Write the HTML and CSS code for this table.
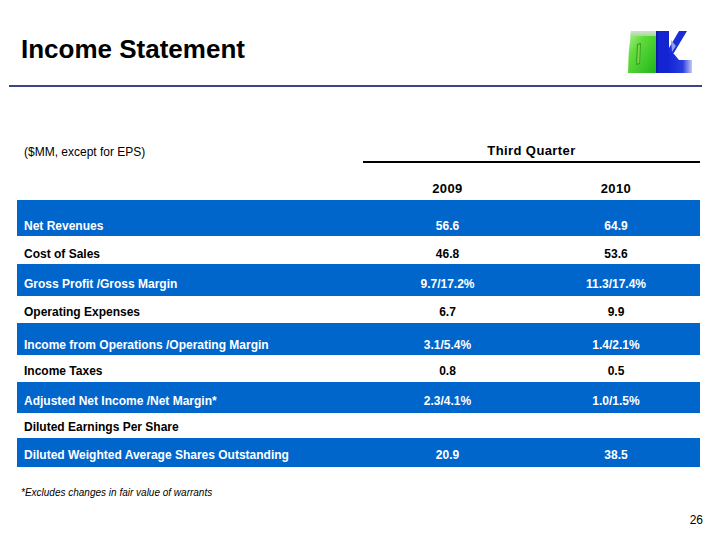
FILE: index.html
```html
<!DOCTYPE html>
<html>
<head>
<meta charset="utf-8">
<link rel="stylesheet" href="styles.css">
</head>
<body>
<div class="page">
  <div class="header">
    <h1 class="title">Income Statement</h1>
    <svg class="logo" width="66" height="44" viewBox="0 0 66 44">
      <defs>
        <linearGradient id="gG" x1="0" y1="0" x2="1" y2="1">
          <stop offset="0" stop-color="#b8eea0"/>
          <stop offset="0.35" stop-color="#5fdc3a"/>
          <stop offset="1" stop-color="#21b51d"/>
        </linearGradient>
        <linearGradient id="gB" x1="0" y1="0" x2="1" y2="0">
          <stop offset="0" stop-color="#1226d6"/>
          <stop offset="0.6" stop-color="#2a3ee0"/>
          <stop offset="1" stop-color="#c4c8f4"/>
        </linearGradient>
        <linearGradient id="gT" x1="0" y1="0" x2="0" y2="1">
          <stop offset="0" stop-color="#d8dcd8"/>
          <stop offset="1" stop-color="#9fe08a"/>
        </linearGradient>
      </defs>
      <path d="M4 1 H29 V43 H1 Q1 22 4 1 Z" fill="url(#gG)"/>
      <path d="M4 1 H29 V6 H3.4 Z" fill="url(#gT)"/>
      <polygon points="10,14 14,13 13,34 9,35" fill="#3b9c1f"/>
      <polygon points="11,15 13,14.5 12.2,33 10.2,33.6" fill="#7fd64f"/>
      <rect x="29" y="1" width="13" height="42" fill="#1424d0"/>
      <polygon points="42,18 52,1 60,1 45,26 42,26" fill="#1a2ed8"/>
      <polygon points="42,24 47,24 52,30 65,30 65,43 42,43" fill="url(#gB)"/>
      <polygon points="44,10 45,22 49,16" fill="#8f9cf0"/>
      <polygon points="29,1 31,1 31,43 29,43" fill="#0c1aa8"/>
    </svg>
  </div>
  <div class="rule"></div>

  <div class="table">
    <div class="row row-head">
      <div class="cell label note">($MM, except for EPS)</div>
      <div class="cell quarter">Third Quarter</div>
    </div>
    <div class="row row-years">
      <div class="cell label"></div>
      <div class="cell year">2009</div>
      <div class="cell year">2010</div>
    </div>

    <div class="row band h36 p3">
      <div class="cell label">Net Revenues</div>
      <div class="cell num">56.6</div>
      <div class="cell num">64.9</div>
    </div>
    <div class="row h28 p3">
      <div class="cell label">Cost of Sales</div>
      <div class="cell num">46.8</div>
      <div class="cell num">53.6</div>
    </div>
    <div class="row band h32 p5">
      <div class="cell label">Gross Profit /Gross Margin</div>
      <div class="cell num">9.7/17.2%</div>
      <div class="cell num">11.3/17.4%</div>
    </div>
    <div class="row h27 p4">
      <div class="cell label">Operating Expenses</div>
      <div class="cell num">6.7</div>
      <div class="cell num">9.9</div>
    </div>
    <div class="row band h32 p3">
      <div class="cell label">Income from Operations /Operating Margin</div>
      <div class="cell num">3.1/5.4%</div>
      <div class="cell num">1.4/2.1%</div>
    </div>
    <div class="row h27 p4">
      <div class="cell label">Income Taxes</div>
      <div class="cell num">0.8</div>
      <div class="cell num">0.5</div>
    </div>
    <div class="row band h31 p5">
      <div class="cell label">Adjusted Net Income /Net Margin*</div>
      <div class="cell num">2.3/4.1%</div>
      <div class="cell num">1.0/1.5%</div>
    </div>
    <div class="row h25 p4">
      <div class="cell label">Diluted Earnings Per Share</div>
      <div class="cell num"></div>
      <div class="cell num"></div>
    </div>
    <div class="row band h29 p5">
      <div class="cell label">Diluted Weighted Average Shares Outstanding</div>
      <div class="cell num">20.9</div>
      <div class="cell num">38.5</div>
    </div>
  </div>

  <p class="footnote">*Excludes changes in fair value of warrants</p>
  <div class="pagenum">26</div>
</div>
</body>
</html>
```

FILE: styles.css
```css
* { box-sizing: border-box; }
html, body { margin: 0; padding: 0; background: #ffffff; }
body { font-family: "Liberation Sans", Arial, sans-serif; color: #000; }

.page { width: 720px; height: 540px; overflow: hidden; }

.header {
  display: flex;
  justify-content: space-between;
  align-items: flex-start;
  height: 85px;
}
.title {
  margin: 34px 0 0 21px;
  font-size: 26px;
  line-height: 30px;
  font-weight: bold;
}
.logo { margin: 30px 27px 0 0; display: block; }

.rule {
  height: 2px;
  margin: 0 18px 0 9px;
  background: #3c4586;
}

.table { margin-left: 17px; width: 683px; }

.row {
  display: grid;
  grid-template-columns: 346px 169px 168px;
  align-items: end;
}
.cell { font-size: 12px; line-height: 14px; font-weight: bold; }
.label { padding-left: 7px; }
.num { text-align: center; }

.row-head { height: 76px; }
.note { font-weight: normal; padding-bottom: 4px; }
.quarter {
  grid-column: 2 / 4;
  text-align: center;
  font-size: 13px;
  line-height: 16px;
  letter-spacing: 0.4px;
  padding-bottom: 2px;
  border-bottom: 2px solid #000;
}
.row-years { height: 37px; padding-bottom: 3px; }
.year { text-align: center; font-size: 13px; line-height: 16px; letter-spacing: 0.4px; }

.band { background: #0066cc; color: #ffffff; }

.h36 { height: 36px; }
.h32 { height: 32px; }
.h31 { height: 31px; }
.h29 { height: 29px; }
.h28 { height: 28px; }
.h27 { height: 27px; }
.h25 { height: 25px; }
.p3 { padding-bottom: 3px; }
.p4 { padding-bottom: 4px; }
.p5 { padding-bottom: 5px; }

.footnote {
  margin: 20px 0 0 21px;
  font-size: 10px;
  line-height: 12px;
  font-style: italic;
}
.pagenum {
  margin: 14px 17px 0 0;
  text-align: right;
  font-size: 12px;
  line-height: 14px;
}
```
